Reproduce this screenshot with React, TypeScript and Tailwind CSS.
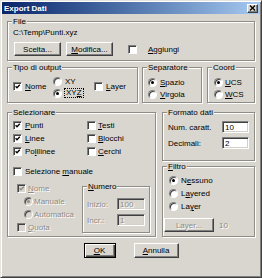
import React from "react";

const DIS = "text-[#8e8b84] [text-shadow:1px_1px_0_#ffffff]";

function Group({
  label,
  className,
  children,
}: {
  label: React.ReactNode;
  className?: string;
  children?: React.ReactNode;
}) {
  return (
    <div
      className={`relative border border-[#8f8c85] shadow-[inset_1px_1px_0_#ffffff,1px_1px_0_#ffffff] ${className ?? ""}`}
    >
      <span className="absolute left-[4px] top-[-5px] whitespace-nowrap bg-[#d9d6cf] px-[1px] leading-[9px]">
        {label}
      </span>
      {children}
    </div>
  );
}

function Chk({ checked, disabled, className }: { checked?: boolean; disabled?: boolean; className?: string }) {
  return (
    <span
      className={`relative inline-block h-[9px] w-[9px] shrink-0 border border-b-white border-l-[#808080] border-r-white border-t-[#808080] shadow-[inset_1px_1px_0_#404040] ${
        disabled ? "bg-[#d9d6cf]" : "bg-white"
      } ${className ?? ""}`}
    >
      {checked && (
        <svg viewBox="0 0 7 7" className="absolute left-0 top-0 h-[7px] w-[7px]">
          <path
            d="M1.6 3.2 L3 4.7 L5.8 1.7"
            fill="none"
            stroke={disabled ? "#8e8b84" : "#000000"}
            strokeWidth="1.3"
          />
        </svg>
      )}
    </span>
  );
}

function Radio({ checked, disabled, className }: { checked?: boolean; disabled?: boolean; className?: string }) {
  return (
    <span
      className={`relative inline-block h-[9px] w-[9px] shrink-0 rounded-full border border-b-white border-l-[#808080] border-r-white border-t-[#808080] shadow-[inset_1px_1px_0_#404040] ${
        disabled ? "bg-[#d9d6cf]" : "bg-white"
      } ${className ?? ""}`}
    >
      {checked && (
        <span
          className={`absolute left-[2px] top-[2px] h-[3px] w-[3px] rounded-full ${disabled ? "bg-[#8e8b84]" : "bg-black"}`}
        />
      )}
    </span>
  );
}

function Btn({
  children,
  className,
  disabled,
  isDefault,
}: {
  children: React.ReactNode;
  className?: string;
  disabled?: boolean;
  isDefault?: boolean;
}) {
  const frame = isDefault
    ? "border border-black shadow-[inset_1px_1px_0_#ffffff,inset_-1px_-1px_0_#404040,inset_-2px_-2px_0_#808080]"
    : "border border-b-[#404040] border-l-white border-r-[#404040] border-t-white shadow-[inset_-1px_-1px_0_#808080]";
  return (
    <div
      className={`flex shrink-0 items-center justify-center whitespace-nowrap bg-[#d9d6cf] ${frame} ${
        disabled ? DIS : ""
      } ${className ?? ""}`}
    >
      {children}
    </div>
  );
}

function Field({ value, disabled, className }: { value: string; disabled?: boolean; className?: string }) {
  return (
    <div
      className={`flex h-[12px] shrink-0 items-center border border-b-white border-l-[#808080] border-r-white border-t-[#808080] pl-[2px] shadow-[inset_1px_1px_0_#404040,inset_-1px_-1px_0_#d4d0c8] ${
        disabled ? `bg-[#d9d6cf] ${DIS}` : "bg-white"
      } ${className ?? ""}`}
    >
      {value}
    </div>
  );
}

export default function App() {
  return (
    <div className="flex h-[278px] w-[262px] flex-col border border-b-[#404040] border-l-[#e6e4df] border-r-[#404040] border-t-[#e6e4df] bg-[#d9d6cf] p-[1px] font-['Liberation_Sans_Narrow','Liberation_Sans',Arial,sans-serif] text-[8px] leading-[9px] text-black shadow-[inset_1px_1px_0_#ffffff,inset_-1px_-1px_0_#808080]">
      {/* title bar */}
      <div className="flex h-[12px] shrink-0 items-center bg-linear-to-r from-[#0a246a] to-[#a6caf0] pl-[2px] pr-[2px]">
        <span className="text-[8px] font-bold text-white">Export Dati</span>
        <span className="ml-auto flex h-[9px] w-[11px] items-center justify-center border border-b-[#404040] border-l-white border-r-[#404040] border-t-white bg-[#d9d6cf] shadow-[inset_-1px_-1px_0_#808080]">
          <svg viewBox="0 0 7 6" className="h-[6px] w-[7px]">
            <path d="M1 0.5 L6 5.5 M6 0.5 L1 5.5" stroke="#000" strokeWidth="1.3" />
          </svg>
        </span>
      </div>

      <div className="flex flex-col px-[5px]">
        {/* File */}
        <Group label="File" className="mt-[7px] h-[40px] pl-[5px] pt-[6px]">
          <div className="leading-[9px]">{"C:\\Temp\\Punti.xyz"}</div>
          <div className="mt-[5px] flex items-center">
            <Btn className="ml-[1px] h-[14px] w-[47px]">Scelta...</Btn>
            <Btn className="ml-[5px] h-[14px] w-[47px]">
              <span>
                <u>M</u>odifica...
              </span>
            </Btn>
            <Chk className="ml-[15px]" />
            <span className="ml-[11px]">
              <u>A</u>ggiungi
            </span>
          </div>
        </Group>

        {/* row 2 */}
        <div className="mt-[6px] flex h-[36px]">
          <Group label="Tipo di output" className="flex w-[131px] items-start pl-[5px] pt-[7px]">
            <div className="mt-[5px] flex h-[12px] w-[40px] items-center">
              <Chk checked />
              <span className="ml-[3px]">
                <u>N</u>ome
              </span>
            </div>
            <div className="flex w-[41px] flex-col">
              <div className="flex h-[12px] items-center">
                <Radio />
                <span className="ml-[3px]">XY</span>
              </div>
              <div className="flex h-[12px] items-center">
                <Radio checked />
                <span className="ml-[2px] border border-dotted border-black px-[1px] leading-[8px]">
                  XY<u>Z</u>
                </span>
              </div>
            </div>
            <div className="mt-[5px] flex h-[12px] items-center">
              <Chk />
              <span className="ml-[3px]">
                <u>L</u>ayer
              </span>
            </div>
          </Group>

          <Group label="Separatore" className="ml-[4px] flex w-[60px] flex-col pl-[5px] pt-[8px]">
            <div className="flex h-[12px] items-center">
              <Radio checked />
              <span className="ml-[3px]">
                <u>S</u>pazio
              </span>
            </div>
            <div className="flex h-[12px] items-center">
              <Radio />
              <span className="ml-[3px]">
                <u>V</u>irgola
              </span>
            </div>
          </Group>

          <Group label="Coord" className="ml-[5px] flex flex-1 flex-col pl-[6px] pt-[8px]">
            <div className="flex h-[12px] items-center">
              <Radio checked />
              <span className="ml-[2px]">
                <u>U</u>CS
              </span>
            </div>
            <div className="flex h-[12px] items-center">
              <Radio />
              <span className="ml-[2px]">
                <u>W</u>CS
              </span>
            </div>
          </Group>
        </div>

        {/* row 3 */}
        <div className="mt-[9px] flex h-[125px]">
          <Group label="Selezionare" className="flex w-[149px] flex-col pl-[5px] pt-[6px]">
            <div className="grid grid-cols-[74px_1fr]">
              <div className="flex h-[13px] items-center">
                <Chk checked />
                <span className="ml-[3px]">
                  <u>P</u>unti
                </span>
              </div>
              <div className="flex h-[13px] items-center">
                <Chk />
                <span className="ml-[2px]">
                  <u>T</u>esti
                </span>
              </div>
              <div className="flex h-[13px] items-center">
                <Chk checked />
                <span className="ml-[3px]">
                  <u>L</u>inee
                </span>
              </div>
              <div className="flex h-[13px] items-center">
                <Chk />
                <span className="ml-[2px]">
                  <u>B</u>locchi
                </span>
              </div>
              <div className="flex h-[13px] items-center">
                <Chk checked />
                <span className="ml-[3px]">
                  Po<u>l</u>ilinee
                </span>
              </div>
              <div className="flex h-[13px] items-center">
                <Chk />
                <span className="ml-[2px]">
                  <u>C</u>erchi
                </span>
              </div>
            </div>

            <div className="mt-[7px] flex h-[13px] items-center">
              <Chk />
              <span className="ml-[3px]">
                Selezione <u>m</u>anuale
              </span>
            </div>

            <div className="flex">
              <div className="flex w-[69px] flex-col pl-[4px] pt-[4px]">
                <div className="flex h-[13px] items-center">
                  <Chk checked disabled />
                  <span className={`ml-[2px] ${DIS}`}>
                    <u>N</u>ome
                  </span>
                </div>
                <div className="flex h-[13px] items-center pl-[7px]">
                  <Radio checked disabled />
                  <span className={`ml-[1px] ${DIS}`}>Manuale</span>
                </div>
                <div className="flex h-[13px] items-center pl-[7px]">
                  <Radio disabled />
                  <span className={`ml-[1px] ${DIS}`}>Automatica</span>
                </div>
                <div className="flex h-[13px] items-center">
                  <Chk disabled />
                  <span className={`ml-[2px] ${DIS}`}>
                    <u>Q</u>uota
                  </span>
                </div>
              </div>

              <Group
                label={
                  <span>
                    <u>N</u>umero
                  </span>
                }
                className="mt-[8px] flex h-[47px] w-[68px] flex-col pl-[4px] pt-[11px]"
              >
                <div className="flex h-[12px] items-center">
                  <span className={`w-[30px] ${DIS}`}>Inizio:</span>
                  <Field value="100" disabled className="w-[28px]" />
                </div>
                <div className="mt-[4px] flex h-[12px] items-center">
                  <span className={`w-[30px] ${DIS}`}>Incr.:</span>
                  <Field value="1" disabled className="w-[28px]" />
                </div>
              </Group>
            </div>
          </Group>

          <div className="ml-[6px] flex flex-1 flex-col">
            <Group label="Formato dati" className="flex h-[49px] flex-col pl-[5px] pr-[5px] pt-[8px]">
              <div className="flex h-[12px] items-center justify-between">
                <span>Num. caratt.</span>
                <Field value="10" className="w-[27px]" />
              </div>
              <div className="mt-[4px] flex h-[12px] items-center justify-between">
                <span>Decimali:</span>
                <Field value="2" className="w-[27px]" />
              </div>
            </Group>

            <Group
              label={
                <span>
                  <u>F</u>iltro
                </span>
              }
              className="mt-[5px] flex flex-1 flex-col pt-[7px]"
            >
              <div className="flex flex-col pl-[6px]">
                <div className="flex h-[13px] items-center">
                  <Radio checked />
                  <span className="ml-[3px]">
                    N<u>e</u>ssuno
                  </span>
                </div>
                <div className="flex h-[13px] items-center">
                  <Radio />
                  <span className="ml-[3px]">
                    L<u>a</u>yered
                  </span>
                </div>
                <div className="flex h-[13px] items-center">
                  <Radio />
                  <span className="ml-[3px]">
                    La<u>y</u>er
                  </span>
                </div>
              </div>
              <div className="mt-[5px] flex items-center pl-[1px]">
                <Btn disabled className="h-[14px] w-[50px]">
                  Layer...
                </Btn>
                <span className={`ml-[5px] ${DIS}`}>10</span>
              </div>
            </Group>
          </div>
        </div>

        {/* bottom buttons */}
        <div className="mt-[6px] flex justify-center gap-[18px]">
          <Btn isDefault className="h-[15px] w-[32px]">
            <span>
              <u>O</u>K
            </span>
          </Btn>
          <Btn className="h-[15px] w-[45px]">
            <span>
              <u>A</u>nnulla
            </span>
          </Btn>
        </div>
      </div>
    </div>
  );
}
